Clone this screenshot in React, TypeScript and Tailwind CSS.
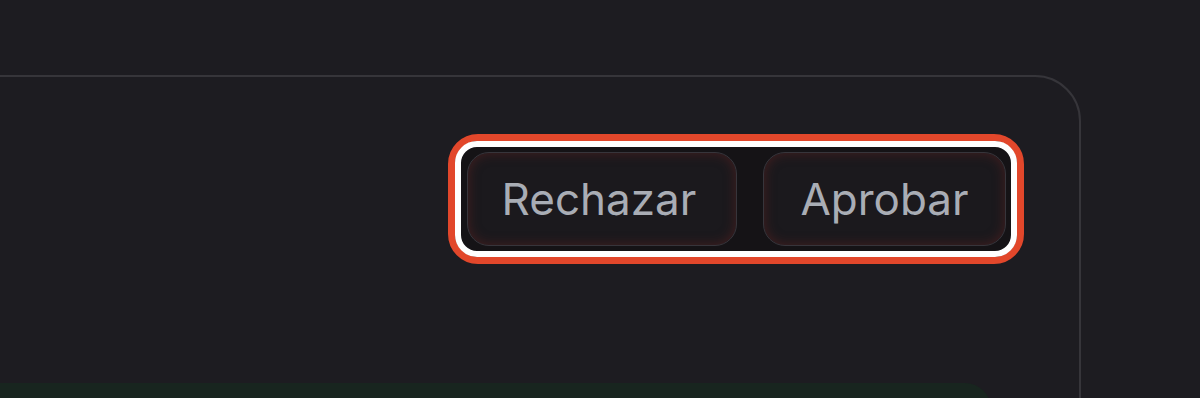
function ActionButton({ label, className }: { label: string; className: string }) {
  return (
    <button
      className={
        "h-[94px] rounded-[22px] border border-[#37353b] bg-[#1b191d] text-[44px] leading-none text-[#a9adb5] shadow-[inset_0_0_12px_rgba(110,36,34,0.5)] " +
        className
      }
    >
      {label}
    </button>
  )
}

export default function App() {
  return (
    <div className="h-[398px] w-[1200px] overflow-hidden bg-[#1d1c21] pt-[75px] font-['Inter',sans-serif]">
      <div className="-ml-[60px] h-[420px] w-[1141px] rounded-[46px] border-2 border-[#36353a]">
        <div className="flex justify-end pr-[55px] pt-[57px]">
          <div className="rounded-[30px] border-[7px] border-[#e2472b]">
            <div className="flex gap-[26px] rounded-[22px] border-[6px] border-white bg-[#151316] py-[5px] pl-[6px] pr-[5px]">
              <ActionButton label="Rechazar" className="w-[270px] pr-[6px]" />
              <ActionButton label="Aprobar" className="w-[243px]" />
            </div>
          </div>
        </div>
        <div className="mr-[88px] mt-[119px] h-[40px] rounded-tr-[26px] bg-[#18251f]" />
      </div>
    </div>
  )
}
